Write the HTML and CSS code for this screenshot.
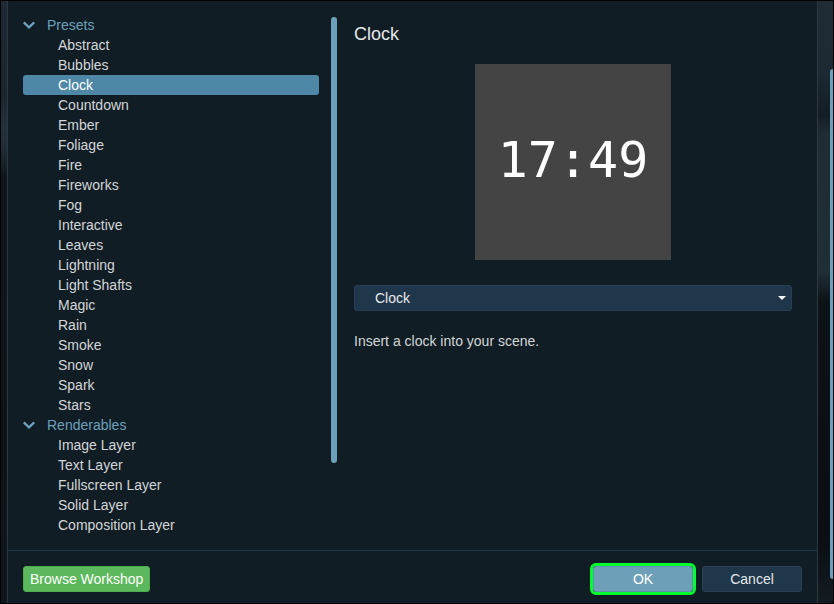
FILE: index.html
```html
<!DOCTYPE html>
<html lang="en">
<head>
<meta charset="utf-8">
<meta name="viewport" content="width=device-width, initial-scale=1">
<title>Add layer</title>
<link rel="stylesheet" href="styles.css">
</head>
<body>
<div class="backdrop">
  <main class="dialog">
    <div class="content">
      <nav class="tree">
        <section>
          <h2 class="group"><svg class="chevron" viewBox="0 0 12 8" aria-hidden="true"><path d="M.8 1.3 6 6.3 11.2 1.3"/></svg>Presets</h2>
          <ul class="items">
            <li><a href="#">Abstract</a></li>
            <li><a href="#">Bubbles</a></li>
            <li><a href="#" class="selected" aria-current="true">Clock</a></li>
            <li><a href="#">Countdown</a></li>
            <li><a href="#">Ember</a></li>
            <li><a href="#">Foliage</a></li>
            <li><a href="#">Fire</a></li>
            <li><a href="#">Fireworks</a></li>
            <li><a href="#">Fog</a></li>
            <li><a href="#">Interactive</a></li>
            <li><a href="#">Leaves</a></li>
            <li><a href="#">Lightning</a></li>
            <li><a href="#">Light Shafts</a></li>
            <li><a href="#">Magic</a></li>
            <li><a href="#">Rain</a></li>
            <li><a href="#">Smoke</a></li>
            <li><a href="#">Snow</a></li>
            <li><a href="#">Spark</a></li>
            <li><a href="#">Stars</a></li>
          </ul>
        </section>
        <section>
          <h2 class="group"><svg class="chevron" viewBox="0 0 12 8" aria-hidden="true"><path d="M.8 1.3 6 6.3 11.2 1.3"/></svg>Renderables</h2>
          <ul class="items">
            <li><a href="#">Image Layer</a></li>
            <li><a href="#">Text Layer</a></li>
            <li><a href="#">Fullscreen Layer</a></li>
            <li><a href="#">Solid Layer</a></li>
            <li><a href="#">Composition Layer</a></li>
          </ul>
        </section>
      </nav>
      <div class="tree-scroll"><div class="thumb"></div></div>
      <section class="details">
        <h1 class="title" id="preset-title">Clock</h1>
        <div class="preview">17:49</div>
        <div class="select-box">
          <select class="select" aria-labelledby="preset-title">
            <option>Clock</option>
          </select>
          <svg class="caret" viewBox="0 0 8 4" aria-hidden="true"><path d="M0 0h8L4 4z"/></svg>
        </div>
        <p class="description">Insert a clock into your scene.</p>
      </section>
    </div>
    <footer class="footer">
      <button type="button" class="button browse">Browse Workshop</button>
      <button type="button" class="button ok">OK</button>
      <button type="button" class="button cancel">Cancel</button>
    </footer>
  </main>
  <div class="page-scroll"><div class="thumb"></div></div>
</div>
</body>
</html>
```
FILE: styles.css
```css
* {
  box-sizing: border-box;
}

body {
  margin: 0;
  background: #000;
  color: #d3d6d8;
  font: 14px/20px "Liberation Sans", Arial, sans-serif;
}

h1, h2, p, ul {
  margin: 0;
  padding: 0;
  font-weight: normal;
}

.backdrop {
  display: flex;
  min-height: 100vh;
  border: 1px solid #000;
  background:
    linear-gradient(#1d2a33 0%, #1a262e 16%, #22333e 21%, #1d2b34 25%, #10171c 29%, #0e1317 75%, #10171c 100%) left / 6px 100% no-repeat,
    linear-gradient(#1f2c35 0%, #1c2932 12%, #131d23 19%, #1f2c34 22%, #202e36 45%, #0d1216 50%, #0b0f13 90%, #131c22 100%);
}

.dialog {
  display: flex;
  flex: 1;
  flex-direction: column;
  margin-left: 6px;
  border: solid #2c3940;
  border-width: 0 1px;
  background: #111d25;
}

.content {
  display: flex;
  flex: 1;
  padding: 14px 25px 14px 15px;
}

.tree {
  flex: 0 0 296px;
}

.group {
  display: flex;
  align-items: center;
  gap: 12px;
  color: #6ca0bb;
  font-size: 14px;
}

.chevron {
  width: 12px;
  height: 8px;
  fill: none;
  stroke: currentColor;
  stroke-width: 2.3;
}

.items {
  list-style: none;
}

.items a {
  display: block;
  padding-left: 35px;
  border-radius: 3px;
  color: inherit;
  text-decoration: none;
}

.items .selected {
  background: #4f88a6;
  color: #fff;
}

.tree-scroll {
  flex: 0 0 6px;
  margin: 2px 17px 0 12px;
}

.thumb {
  border-radius: 3px;
  background: #6c9fb9;
}

.tree-scroll .thumb {
  height: 86%;
}

.details {
  display: flex;
  flex: 1;
  flex-direction: column;
}

.title {
  padding-top: 9px;
  color: #e4e6e8;
  font-size: 18px;
  line-height: 20px;
}

.preview {
  align-self: center;
  width: 196px;
  margin: 20px 0 25px;
  padding-bottom: 4px;
  background: #444;
  color: #fff;
  font: 50px/192px "DejaVu Sans Mono", monospace;
  text-align: center;
}

.select-box {
  position: relative;
}

.select {
  display: block;
  width: 100%;
  height: 26px;
  padding: 0 20px;
  appearance: none;
  border: 1px solid #254058;
  border-radius: 3px;
  background: #20364b;
  color: #e8ebed;
  font: inherit;
}

.caret {
  position: absolute;
  top: 11px;
  right: 6px;
  width: 8px;
  height: 4px;
  fill: #fff;
  pointer-events: none;
}

.description {
  margin-top: 20px;
}

.footer {
  display: flex;
  align-items: center;
  gap: 7px;
  padding: 15px 15px 11px;
  border-top: 1px solid #1e364c;
}

.button {
  width: 100px;
  height: 26px;
  padding: 0;
  border: 1px solid #29425a;
  border-radius: 3px;
  background: #20364b;
  color: #e4e8eb;
  font: inherit;
}

.browse {
  width: auto;
  margin-right: auto;
  padding: 0 6px;
  border-color: #4cae4c;
  background: #5cb85c;
  color: #fff;
}

.ok {
  border-color: #5e93b0;
  background: #6e9fb9;
  color: #fff;
  margin-right: 2px;
  outline: 3px solid #00ff2f;
}

.page-scroll {
  flex: 0 0 3px;
  margin-left: 12px;
  padding-top: 68px;
}

.page-scroll .thumb {
  height: 510px;
  border-radius: 3px 0 0 3px;
}
```
